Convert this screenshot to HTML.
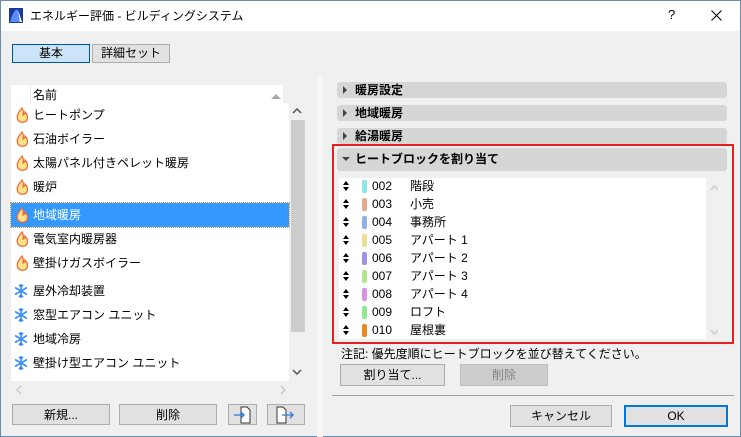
<!DOCTYPE html><html><head><meta charset="utf-8"><style>
*{margin:0;padding:0;box-sizing:border-box}
body{width:741px;height:437px;overflow:hidden;font-family:"Liberation Sans","Noto Sans CJK JP",sans-serif;font-size:12px;color:#000;position:relative;background:#f0f0f0}
.a{position:absolute}
.win{left:0;top:0;width:741px;height:437px;border:1px solid #6b8bab;}
.btn{position:absolute;background:#e1e1e1;border:1px solid #adadad;text-align:center;font-size:12px;line-height:20px}
.row{position:absolute;left:11px;width:278px;height:24px;line-height:24px;padding-left:22px}
.sec{position:absolute;left:337px;width:390px;height:16px;background:#d6d6d6;border-radius:3px;font-weight:bold;line-height:16px;padding-left:18px}
.tri{position:absolute;left:6px;top:4px;width:0;height:0;border-left:4px solid #444;border-top:4px solid transparent;border-bottom:4px solid transparent}
.hr{position:absolute;left:341px;height:18px;line-height:18px;width:360px}
.hr .ud{position:absolute;left:2px;top:4px;width:6px;height:10px}
.hr .sw{position:absolute;left:21px;top:3px;width:5px;height:13px;border-radius:2px}
.hr .n{position:absolute;left:31px}
.hr .t{position:absolute;left:69px}
</style></head><body>
<div class="a win"></div>
<div class="a" style="left:1px;top:1px;width:739px;height:30px;background:#fff"></div>
<svg class="a" style="left:9px;top:8px" width="14" height="15"><rect width="14" height="15" fill="#1a3a9a"/><path d="M1 14 Q5 0 9 2 L13 14Z" fill="#5a8cff"/><path d="M9 2 L13 14 L11 14Z" fill="#fff"/></svg>
<div class="a" style="left:30px;top:7px;font-size:12px">エネルギー評価 - ビルディングシステム</div>
<div class="a" style="left:668px;top:7px;font-size:13px">?</div>
<svg class="a" style="left:711px;top:10px" width="11" height="11"><path d="M0.5 0.5L10.5 10.5M10.5 0.5L0.5 10.5" stroke="#000" stroke-width="1"/></svg>

<div class="btn" style="left:12px;top:44px;width:78px;height:19px;line-height:17px;background:#cce4f7;border:1px solid #005499">基本</div>
<div class="btn" style="left:92px;top:44px;width:78px;height:19px;line-height:17px">詳細セット</div>

<div class="a" style="left:317px;top:75px;width:6px;height:362px;background:#f6f6f6"></div>

<div class="a" style="left:11px;top:85px;width:272px;height:18px;background:#fff"></div>
<div class="a" style="left:30px;top:85px;width:1px;height:18px;background:#e5e5e5"></div>
<div class="a" style="left:33px;top:86px">名前</div>
<div class="a" style="left:271px;top:94px;border-left:5px solid transparent;border-right:5px solid transparent;border-bottom:5px solid #aaa"></div>
<div class="a" style="left:11px;top:103px;width:278px;height:278px;background:#fff"></div>
<div class="a" style="left:290px;top:103px;width:16px;height:278px;background:#f0f0f0"></div>
<div class="a" style="left:291px;top:120px;width:14px;height:212px;background:#cdcdcd"></div>
<svg class="a" style="left:292px;top:108px" width="10" height="6"><path d="M1 5L5 1L9 5" stroke="#555" stroke-width="1.5" fill="none"/></svg>
<svg class="a" style="left:292px;top:369px" width="10" height="6"><path d="M1 1L5 5L9 1" stroke="#555" stroke-width="1.5" fill="none"/></svg>
<svg class="a" style="left:16px;top:385px" width="6" height="10"><path d="M5 1L1 5L5 9" stroke="#bbb" fill="none"/></svg>
<svg class="a" style="left:280px;top:385px" width="6" height="10"><path d="M1 1L5 5L1 9" stroke="#bbb" fill="none"/></svg>

<div class="row" style="top:103px">ヒートポンプ</div>
<div class="row" style="top:127px">石油ボイラー</div>
<div class="row" style="top:151px">太陽パネル付きペレット暖房</div>
<div class="row" style="top:175px">暖炉</div>
<div class="row" style="top:203px;background:#3399ff;color:#fff;outline:1px dotted #c96">地域暖房</div>
<div class="row" style="top:227px">電気室内暖房器</div>
<div class="row" style="top:251px">壁掛けガスボイラー</div>
<div class="row" style="top:279px">屋外冷却装置</div>
<div class="row" style="top:303px">窓型エアコン ユニット</div>
<div class="row" style="top:327px">地域冷房</div>
<div class="row" style="top:351px">壁掛け型エアコン ユニット</div>
<svg class="a" style="left:0;top:0" width="40" height="380">
<defs><g id="f"><path d="M7 1 C3 6 1 9 3 13 C5 16 10 16 12 13 C13 10 12 7 10 5 C10 7 9 8 8 8 C9 5 8 3 7 1Z" fill="#ffe38a" stroke="#f06a3a" stroke-width="1.3"/></g>
<g id="s" stroke="#3a8ef0" stroke-width="1.6" fill="none"><path d="M7 1V15M1 4.5L13 11.5M1 11.5L13 4.5M5 2L7 4L9 2M5 14L7 12L9 14"/></g></defs>
<use href="#f" x="15" y="107"/><use href="#f" x="15" y="131"/><use href="#f" x="15" y="155"/><use href="#f" x="15" y="179"/><use href="#f" x="15" y="207"/><use href="#f" x="15" y="231"/><use href="#f" x="15" y="255"/>
<use href="#s" x="14" y="283"/><use href="#s" x="14" y="307"/><use href="#s" x="14" y="331"/><use href="#s" x="14" y="355"/>
</svg>

<div class="btn" style="left:12px;top:404px;width:98px;height:21px">新規...</div>
<div class="btn" style="left:119px;top:404px;width:98px;height:21px">削除</div>
<div class="btn" style="left:228px;top:404px;width:29px;height:21px"></div>
<div class="btn" style="left:267px;top:404px;width:38px;height:21px"></div>
<svg class="a" style="left:233px;top:406px" width="20" height="18"><path d="M8 1H14L17 4V17H8Z" fill="#fff" stroke="#333"/><path d="M1 9H11M8 6L11 9L8 12" stroke="#2a7ad8" fill="none" stroke-width="1.3"/></svg>
<svg class="a" style="left:275px;top:406px" width="24" height="18"><path d="M2 1H8L11 4V17H2Z" fill="#fff" stroke="#333"/><path d="M7 9H18M15 6L18 9L15 12" stroke="#2a7ad8" fill="none" stroke-width="1.3"/></svg>

<div class="sec" style="top:82px"><span class="tri"></span>暖房設定</div>
<div class="sec" style="top:105px"><span class="tri"></span>地域暖房</div>
<div class="sec" style="top:128px"><span class="tri"></span>給湯暖房</div>
<div class="a" style="left:332px;top:144px;width:402px;height:200px;border:2px solid #e52020"></div>
<div class="sec" style="top:148px;height:23px;line-height:22px"><span style="position:absolute;left:5px;top:9px;border-top:4px solid #444;border-left:4px solid transparent;border-right:4px solid transparent"></span>ヒートブロックを割り当て</div>
<div class="a" style="left:339px;top:178px;width:367px;height:161px;background:#fff"></div>
<svg class="a" style="left:710px;top:185px" width="9" height="6"><path d="M1 5L4.5 1L8 5" stroke="#ccc" stroke-width="1.5" fill="none"/></svg>
<svg class="a" style="left:710px;top:329px" width="9" height="6"><path d="M1 1L4.5 5L8 1" stroke="#ccc" stroke-width="1.5" fill="none"/></svg>

<div class="hr" style="top:177px"><svg class="ud"><path d="M0 4L3 0L6 4ZM0 6L3 10L6 6Z" fill="#000"/></svg><span class="sw" style="background:#8ee6e6"></span><span class="n">002</span><span class="t">階段</span></div>
<div class="hr" style="top:195px"><svg class="ud"><path d="M0 4L3 0L6 4ZM0 6L3 10L6 6Z" fill="#000"/></svg><span class="sw" style="background:#e8a890"></span><span class="n">003</span><span class="t">小売</span></div>
<div class="hr" style="top:213px"><svg class="ud"><path d="M0 4L3 0L6 4ZM0 6L3 10L6 6Z" fill="#000"/></svg><span class="sw" style="background:#90b0e8"></span><span class="n">004</span><span class="t">事務所</span></div>
<div class="hr" style="top:231px"><svg class="ud"><path d="M0 4L3 0L6 4ZM0 6L3 10L6 6Z" fill="#000"/></svg><span class="sw" style="background:#e8e090"></span><span class="n">005</span><span class="t">アパート 1</span></div>
<div class="hr" style="top:249px"><svg class="ud"><path d="M0 4L3 0L6 4ZM0 6L3 10L6 6Z" fill="#000"/></svg><span class="sw" style="background:#a090e8"></span><span class="n">006</span><span class="t">アパート 2</span></div>
<div class="hr" style="top:267px"><svg class="ud"><path d="M0 4L3 0L6 4ZM0 6L3 10L6 6Z" fill="#000"/></svg><span class="sw" style="background:#b0e890"></span><span class="n">007</span><span class="t">アパート 3</span></div>
<div class="hr" style="top:285px"><svg class="ud"><path d="M0 4L3 0L6 4ZM0 6L3 10L6 6Z" fill="#000"/></svg><span class="sw" style="background:#d890e8"></span><span class="n">008</span><span class="t">アパート 4</span></div>
<div class="hr" style="top:303px"><svg class="ud"><path d="M0 4L3 0L6 4ZM0 6L3 10L6 6Z" fill="#000"/></svg><span class="sw" style="background:#90e890"></span><span class="n">009</span><span class="t">ロフト</span></div>
<div class="hr" style="top:321px"><svg class="ud"><path d="M0 4L3 0L6 4ZM0 6L3 10L6 6Z" fill="#000"/></svg><span class="sw" style="background:#e88a20"></span><span class="n">010</span><span class="t">屋根裏</span></div>

<div class="a" style="left:341px;top:345px">注記: 優先度順にヒートブロックを並び替えてください。</div>
<div class="btn" style="left:340px;top:364px;width:105px;height:22px">割り当て...</div>
<div class="btn" style="left:460px;top:364px;width:88px;height:22px;background:#cccccc;border-color:#bfbfbf;color:#838383">削除</div>
<div class="a" style="left:332px;top:395px;width:402px;height:1px;background:#a0a0a0"></div>
<div class="btn" style="left:510px;top:405px;width:102px;height:22px">キャンセル</div>
<div class="btn" style="left:624px;top:405px;width:104px;height:22px;border:2px solid #0078d7;line-height:18px">OK</div>
</body></html>
